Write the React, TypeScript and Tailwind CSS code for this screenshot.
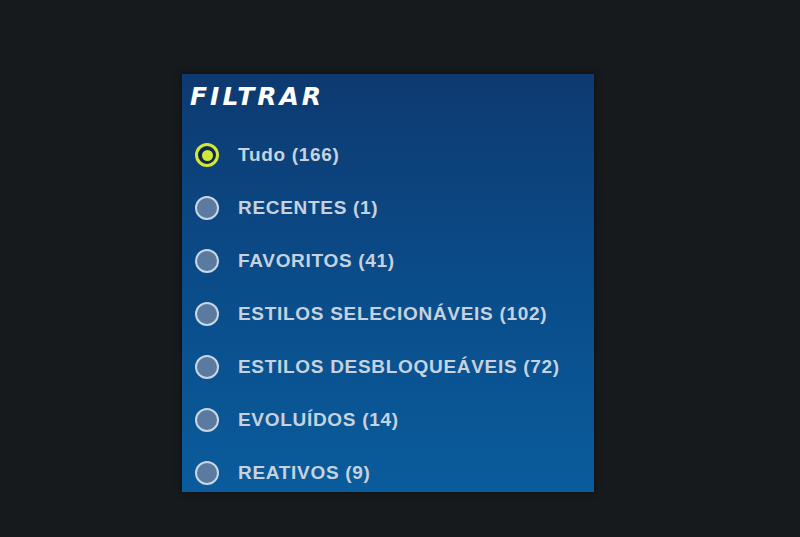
const items = [
  { label: "Tudo (166)", selected: true },
  { label: "RECENTES (1)" },
  { label: "FAVORITOS (41)" },
  { label: "ESTILOS SELECIONÁVEIS (102)" },
  { label: "ESTILOS DESBLOQUEÁVEIS (72)" },
  { label: "EVOLUÍDOS (14)" },
  { label: "REATIVOS (9)" },
];

function Radio({ selected }: { selected?: boolean }) {
  if (selected) {
    return (
      <span className="flex h-[24px] w-[24px] items-center justify-center rounded-full border-[3px] border-[#d3e63a] bg-[#0e2a4a]">
        <span className="h-[11px] w-[11px] rounded-full bg-[#d3e63a]" />
      </span>
    );
  }
  return (
    <span className="h-[24px] w-[24px] rounded-full border-2 border-[#c9d6e4] bg-[#5a7aa0]" />
  );
}

export default function App() {
  return (
    <div className="flex h-[537px] w-[800px] bg-[#171a1d] pl-[182px] pt-[74px] font-['Liberation_Sans',sans-serif]">
      <div className="h-[418px] w-[412px] bg-gradient-to-b from-[#0d3a70] via-[#0a4c8a] to-[#0a5c9c] shadow-[0_0_6px_rgba(0,0,0,0.5)]">
        <h2 className="pl-[8px] pt-[10px] font-['DejaVu_Sans',sans-serif] text-[25px] font-bold italic leading-[26px] tracking-[3px] text-white">
          FILTRAR
        </h2>
        <ul className="mt-[33px] flex flex-col gap-[29px] pl-[13px]">
          {items.map((it) => (
            <li key={it.label} className="flex h-[24px] items-center gap-[19px]">
              <Radio selected={it.selected} />
              <span className="text-[19px] font-bold tracking-[0.7px] text-[#c6d2de]">{it.label}</span>
            </li>
          ))}
        </ul>
      </div>
    </div>
  );
}
